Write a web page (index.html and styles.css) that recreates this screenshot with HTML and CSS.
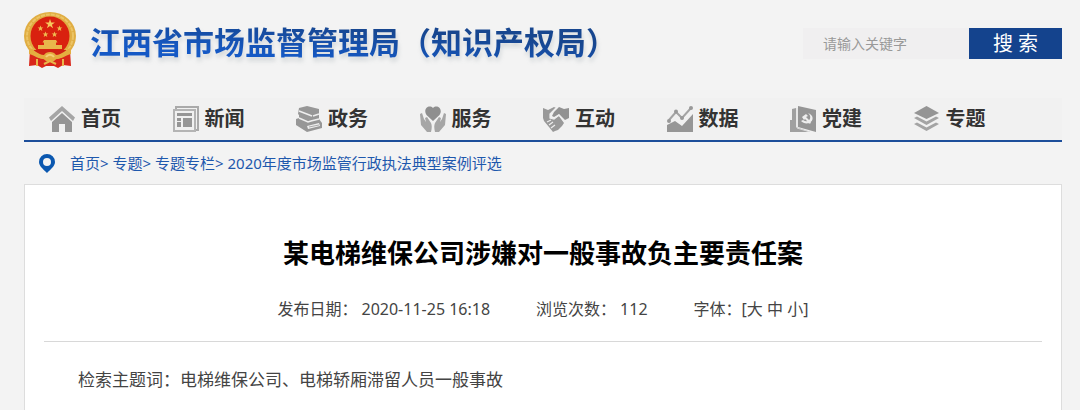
FILE: index.html
```html
<!DOCTYPE html>
<html lang="zh-CN">
<head>
<meta charset="utf-8">
<meta name="viewport" content="width=device-width, initial-scale=1">
<title>某电梯维保公司涉嫌对一般事故负主要责任案</title>
<link rel="stylesheet" href="styles.css">
</head>
<body>
<div class="page">
  <header class="header">
    <a class="brand" href="#">
      <svg class="emblem" viewBox="0 0 52 56" aria-hidden="true">
        <path d="M6 38l-1 16 8-1 5 3 4-2h8l4 2 5-3 8 1-1-16z" fill="#d9261a"/>
        <ellipse cx="26" cy="24" rx="26" ry="24" fill="#e0ad42"/>
        <ellipse cx="26" cy="24" rx="23" ry="21.500" fill="none" stroke="#ecc465" stroke-width="2" stroke-dasharray="4 1"/>
        <circle cx="26" cy="24" r="19.500" fill="#d9210f"/>
        <path d="M26 7l1.200 3.500h3.700l-3 2.200 1.200 3.600-3.100-2.200-3.100 2.200 1.200-3.600-3-2.200h3.700z" fill="#f6c85c"/>
        <g fill="#efbb51">
          <path id="s" d="M16.500 13.500l.8 2h2.100l-1.700 1.300.6 2.100-1.800-1.200-1.800 1.200.6-2.100-1.700-1.300h2.100z"/>
          <use href="#s" x="19"/><use href="#s" x="5" y="6"/><use href="#s" x="14" y="6"/>
        </g>
        <path d="M20 28h12l1.500 2.500h-1.500V33h6v4H14v-4h6v-2.500h-1.500z" fill="#e9b64b"/>
        <path d="M9 38h34l-6 6-11 2-11-2z" fill="#cf2115"/>
        <path d="M5 36c5 1 9 7 15 7 2-4 10-4 12 0 6 0 10-6 15-7v6c-5 1-9 5-15 5-2 4-10 4-12 0-6 0-10-4-15-5z" fill="#e4ad40"/>
        <path d="M22 45c2-3 6-3 8 0" stroke="#f4d077" stroke-width="2" fill="none"/>
        <path d="M13 47v7M39 47v7M20 52l6-3 6 3" fill="none" stroke="#e9b64b" stroke-width="2"/>
      </svg>
      <span class="brand-name">江西省市场监督管理局（知识产权局）</span>
    </a>
    <form class="search">
      <input class="search-input" type="text" aria-label="关键字" placeholder="请输入关键字">
      <button class="search-button" type="button">搜 索</button>
    </form>
  </header>

  <nav class="nav" aria-label="主导航">
    <a class="nav-item" href="#">
      <svg class="icon" viewBox="0 0 26 26" aria-hidden="true"><path d="M13 0l13 11.500-2 3.500L13 5 2 15l-2-3.500z" fill="#a5a5a5"/><path d="M13 7l10 9v10h-7v-8h-6v8H3V16z" fill="#959595"/></svg>
      首页</a>
    <a class="nav-item" href="#">
      <svg class="icon" viewBox="0 0 26 26" fill="none" aria-hidden="true"><path d="M3 3V1h22v23h-3" stroke="#aaa" stroke-width="2"/><path d="M1 4h21v21H1z" stroke="#b4b4b4" stroke-width="2"/><path d="M4 7h15v3H4zM4 12h4v3H4zM4 16h4v5H4zM10 12h9v9h-9z" fill="#969696"/></svg>
      新闻</a>
    <a class="nav-item" href="#">
      <svg class="icon" viewBox="0 0 26 26" aria-hidden="true"><path d="M3 2l8-2 12 3v10l3 4v5L11 26 0 19v-6l3-1V9L2 8z" fill="#979797"/><path d="M3 5l13 5M3 12l9 4 3-1 8-2M17 10l6-2" stroke="#eee" stroke-width="1.500" fill="none"/><path d="M11 20l12-3 1 3-12 3z" fill="#eee"/><path d="M13 21l10-2" stroke="#aaa"/></svg>
      政务</a>
    <a class="nav-item" href="#">
      <svg class="icon" viewBox="0 0 26 26" aria-hidden="true"><path d="M13 15L6.500 9C2.500 3 9-2 13 2c4-4 10.500 1 6.500 7z" fill="#8f8f8f"/><path id="hand" d="M0 8l2-1 2 6 2 3-1-4 2-1 4 6c1 2 1 5 0 9H7L1 19z" fill="#a6a6a6"/><use href="#hand" transform="matrix(-1 0 0 1 26 0)"/></svg>
      服务</a>
    <a class="nav-item" href="#">
      <svg class="icon" viewBox="0 0 26 26" aria-hidden="true"><path d="M0 2l5 2 6-3 2 1-6 6v4l4 1 5-3 5 7-2 3-2 2-2 2-3 1-2 1-4-5-5-6-1-3-3-1z" fill="#999"/><path d="M11 6l5-5 5 2 5-1v10l-4 2-6-6-5 3-2-1z" fill="#929292"/><path d="M13 2L7 8v4l4 1 5-4 6 7M4 16l4-2M6 19l4-3M8 22l4-3" stroke="#eee" stroke-width="1.200" fill="none"/></svg>
      互动</a>
    <a class="nav-item" href="#">
      <svg class="icon" viewBox="0 0 26 26" aria-hidden="true"><path d="M0 19l8-4 7 5L26 8v18H0z" fill="#969696"/><path d="M2 14l7-8 6 6L24 2" stroke="#a4a4a4" stroke-width="2" fill="none"/><g fill="#999"><circle cx="2" cy="15" r="2"/><circle cx="9" cy="5.500" r="2"/><circle cx="15" cy="12" r="2"/><circle cx="24" cy="2" r="2"/></g></svg>
      数据</a>
    <a class="nav-item" href="#">
      <svg class="icon" viewBox="0 0 26 26" aria-hidden="true"><path d="M2 3l4-1v19l14 5H0V14h2z" fill="#a0a0a0"/><path d="M8 0l18 4v22L8 21z" fill="#959595"/><path d="M7 2v20l13 4" stroke="#ddd" fill="none"/><path d="M12 11l4-3 2 2-2 1 5 5-1 2-5-5-1 1zM18 7c6 2 6 8 1 10-3 1-6 0-8-2l2-1c6 4 10-3 5-7z" fill="#eee"/></svg>
      党建</a>
    <a class="nav-item" href="#">
      <svg class="icon" viewBox="0 0 26 26" aria-hidden="true"><path d="M12.500 0L25 7l-12.500 6L0 7z" fill="#959595"/><path d="M0 12l3-1.500 9.500 5 9.500-5 3 1.500-12.500 7zM0 18l3-1.500 9.500 5 9.500-5 3 1.500-12.500 7z" fill="#a4a4a4"/></svg>
      专题</a>
  </nav>

  <div class="crumbs">
    <svg class="pin" viewBox="0 0 16 19" aria-hidden="true"><path fill-rule="evenodd" d="M8 0a8 8 0 0 1 8 8c0 4-4 7-8 11C4 15 0 12 0 8a8 8 0 0 1 8-8zm0 4a4 4 0 1 0 0 8 4 4 0 0 0 0-8z" fill="#0b58b0"/></svg>
    <nav aria-label="当前位置"><a href="#">首页</a>&gt; <a href="#">专题</a>&gt; <a href="#">专题专栏</a>&gt; <a href="#">2020年度市场监管行政执法典型案例评选</a></nav>
  </div>

  <main class="article">
    <h1 class="title">某电梯维保公司涉嫌对一般事故负主要责任案</h1>
    <div class="meta">
      <span class="meta-item"><span>发布日期：</span><time>2020-11-25 16:18</time></span>
      <span class="meta-item"><span>浏览次数：</span><span>112</span></span>
      <span>字体：[<a href="#">大</a> <a href="#">中</a> <a href="#">小</a>]</span>
    </div>
    <p class="text">检索主题词：电梯维保公司、电梯轿厢滞留人员一般事故</p>
  </main>
</div>
</body>
</html>
```
FILE: styles.css
```css
* {
  box-sizing: border-box;
}

body {
  margin: 0;
  background: #f3f3f3;
  color: #444;
  font-family: "Noto Sans", "Noto Sans CJK SC", sans-serif;
  font-size: 16px;
  line-height: 24px;
}

a {
  color: inherit;
  text-decoration: none;
}

.page {
  padding: 0 18px 0 24px;
}

.header {
  display: flex;
  align-items: flex-start;
  justify-content: space-between;
  padding: 12px 0 26px;
}

.brand {
  display: flex;
  align-items: flex-start;
  gap: 14px;
}

.emblem {
  width: 52px;
  height: 56px;
}

.brand-name {
  background: linear-gradient(184deg, #17468f 35%, #1559c5 70%);
  background-clip: text;
  -webkit-background-clip: text;
  color: transparent;
  filter: drop-shadow(1px 4px 2px rgba(90, 110, 120, 0.2));
  font-size: 31px;
  font-weight: 700;
  line-height: 60px;
  white-space: nowrap;
}

.search {
  display: flex;
  height: 31px;
  margin-top: 16px;
}

.search-input {
  width: 166px;
  padding: 0 20px;
  border: 0;
  background: #f0eff0;
  color: #444;
  font: inherit;
  font-size: 14px;
}

.search-input::placeholder {
  color: #999;
}

.search-button {
  width: 93px;
  padding: 0;
  border: 0;
  background: #14438d;
  color: #fff;
  font: inherit;
  font-size: 20px;
}

.nav {
  display: grid;
  grid-template-columns: repeat(8, 1fr);
  padding: 0 25px;
  border-bottom: 2px solid #1d4e9a;
  background: #f1f1f1;
}

.nav-item {
  display: flex;
  align-items: center;
  gap: 6px;
  color: #333;
  font-size: 20px;
  font-weight: 700;
  line-height: 42px;
}

.icon {
  width: 26px;
  height: 26px;
}

.crumbs {
  display: flex;
  align-items: center;
  gap: 15px;
  padding: 0 15px;
  color: #1e58ad;
  font-size: 15px;
  line-height: 42px;
}

.pin {
  width: 16px;
  height: 19px;
}

.article {
  padding: 46px 19px 0;
  border: 1px solid #ddd;
  border-bottom: 0;
  background: #fff;
}

.title {
  margin: 0 0 22px;
  color: #000;
  font-size: 26px;
  font-weight: 700;
  line-height: 44px;
  text-align: center;
}

.meta {
  display: flex;
  justify-content: center;
  gap: 46px;
  padding-bottom: 20px;
  border-bottom: 1px solid #d8d8d8;
}

.meta-item {
  display: flex;
  gap: 4px;
}

.text {
  margin: 0;
  padding: 24px 0 16px;
  font-size: 17px;
  line-height: 28px;
  text-indent: 2em;
}
```
